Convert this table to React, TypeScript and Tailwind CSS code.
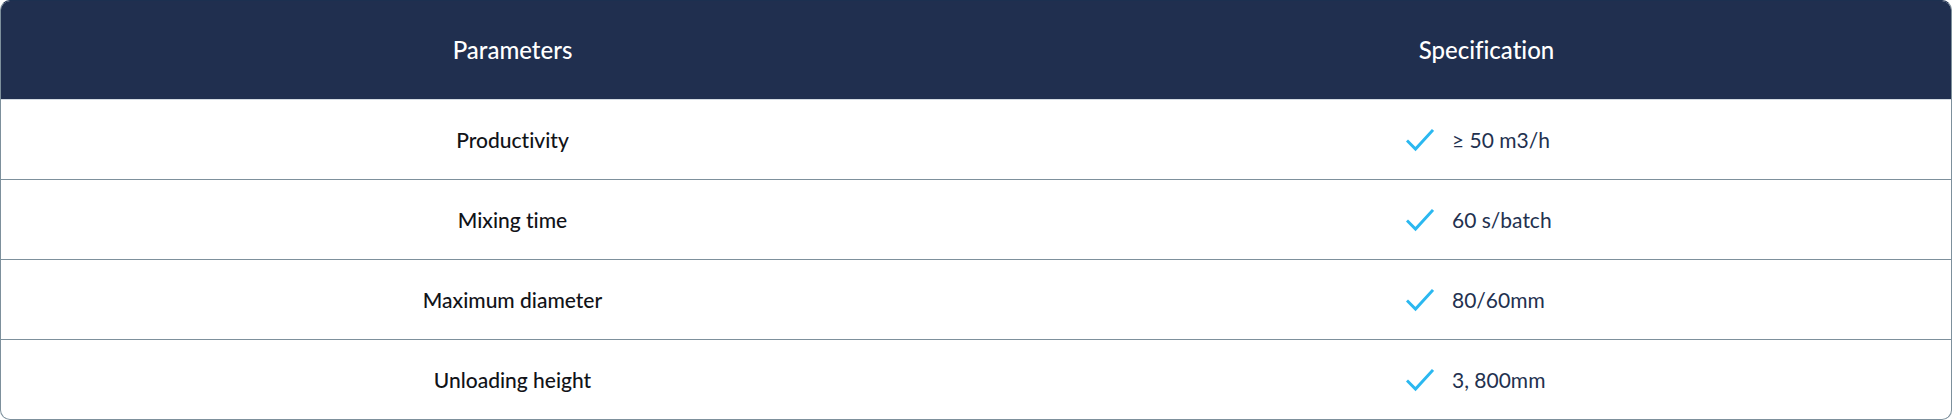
import React from "react";

const rows = [
  { p: "Productivity", s: "≥ 50 m3/h" },
  { p: "Mixing time", s: "60 s/batch" },
  { p: "Maximum diameter", s: "80/60mm" },
  { p: "Unloading height", s: "3, 800mm" },
];

function Check() {
  return (
    <svg width="28" height="24" viewBox="0 0 28 24" fill="none" className="shrink-0">
      <path d="M2 13.5 L9.5 21 L26 3" stroke="#2bb8f0" strokeWidth="3" strokeLinecap="square" strokeLinejoin="miter" />
    </svg>
  );
}

export default function App() {
  return (
    <div
      className="w-[1952px] h-[420px] bg-white [font-variant-ligatures:none]"
      style={{ fontFamily: "Lato, 'Open Sans', sans-serif" }}
    >
      <div className="w-full h-full rounded-[10px] border border-[#7d909c] border-t-[#1c3050] overflow-hidden flex flex-col">
        <div className="h-[99px] shrink-0 bg-[#202f4f] border-b border-[#d3dae2] grid grid-cols-[1023px_1fr] text-white text-[24px] font-medium">
          <div className="flex items-center justify-center">Parameters</div>
          <div className="flex items-center justify-center pr-[2px]">Specification</div>
        </div>
        {rows.map((r, i) => (
          <div
            key={r.p}
            className={
              i < rows.length - 1
                ? "h-[80px] shrink-0 border-b border-[#7d909c] grid grid-cols-[1023px_1fr]"
                : "flex-1 grid grid-cols-[1023px_1fr]"
            }
          >
            <div className="flex items-center justify-center text-[21px] font-medium text-[#111318]">{r.p}</div>
            <div className="flex items-center pl-[382px] gap-[18px] text-[21px] text-[#23314f]">
              <Check />
              <span>{r.s}</span>
            </div>
          </div>
        ))}
      </div>
    </div>
  );
}
